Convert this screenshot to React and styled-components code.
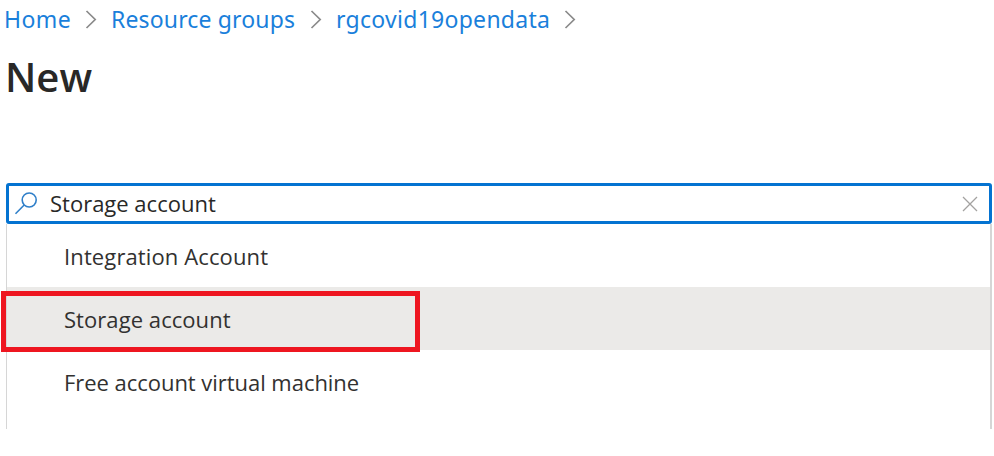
import React from 'react';
import styled, { createGlobalStyle } from 'styled-components';

const Global = createGlobalStyle`
  *{box-sizing:border-box}
  body{margin:0;background:#fff;font-family:"Open Sans","Noto Sans",sans-serif;color:#323130}
`;
const Page = styled.main`width:994px;height:456px;overflow:hidden;padding-left:6px;`;
const Breadcrumb = styled.nav`display:flex;align-items:center;height:39px;margin-left:-2px;`;
const Crumb = styled.a`
  width:${p => p.$w}px;font:23px/38px "Noto Sans",sans-serif;letter-spacing:${p => p.$ls}px;color:#1a7fdb;white-space:nowrap;
  padding-bottom:2px;
`;
const Separator = styled.svg`width:12px;height:19px;margin:0 ${p => p.$r}px 0 ${p => p.$l}px;flex:none;`;
const Title = styled.h1`margin:13px 0 0 -1px;height:50px;font:600 40px/50px "Open Sans",sans-serif;color:#292827;`;
const SearchBox = styled.div`
  display:flex;align-items:center;width:986px;height:41px;margin-top:81px;
  border:3px solid #0473d1;border-radius:3px;padding:0 11px 0 5px;
`;
const Query = styled.span`flex:1;margin-left:12px;font-size:22px;line-height:35px;color:#292827;`;
const Results = styled.ul`
  list-style:none;margin:0;padding:0;width:986px;height:205px;
  border:solid #d6d6d6;border-width:0 2px 0 1px;
`;
const Result = styled.li`
  position:relative;height:63px;line-height:62px;padding:1px 0 0 57px;font-size:22px;letter-spacing:${p => p.$ls || 0}px;
  background:${p => (p.$active ? '#ebeae8' : 'transparent')};
`;
const Highlight = styled.span`
  position:absolute;left:-6px;top:4px;width:419px;height:61px;border:5px solid #ee1620;z-index:1;
`;
const Sep = ({ l, r }) => (
  <Separator $l={l} $r={r} viewBox="0 0 12 19" fill="none" stroke="#8a8a8a" strokeWidth="1.7"><path d="M1.5 1l8.7 8.5-8.7 8.5" /></Separator>
);

export default function App() {
  return (
    <Page>
      <Global />
      <Breadcrumb>
        <Crumb $w={67} $ls={0.4}>Home</Crumb><Sep l={14} r={14} />
        <Crumb $w={185} $ls={0.15}>Resource groups</Crumb><Sep l={14} r={14} />
        <Crumb $w={215} $ls={0.28}>rgcovid19opendata</Crumb><Sep l={13} r={0} />
      </Breadcrumb>
      <Title>New</Title>
      <SearchBox>
        <svg width="24" height="24" viewBox="0 0 24 24" fill="none" stroke="#2f7fc9" strokeWidth="1.6"><circle cx="15.2" cy="8" r="7" /><path d="M10.2 13l-8.7 8.7" /></svg>
        <Query>Storage account</Query>
        <svg width="16" height="16" viewBox="0 0 16 16" stroke="#a3a2a0" strokeWidth="1.3"><path d="M1 1l14 14M15 1L1 15" /></svg>
      </SearchBox>
      <Results>
        <Result $ls={0.12}>Integration Account</Result>
        <Result $active $ls={0.06}>Storage account<Highlight /></Result>
        <Result $ls={-0.04}>Free account virtual machine</Result>
      </Results>
    </Page>
  );
}
